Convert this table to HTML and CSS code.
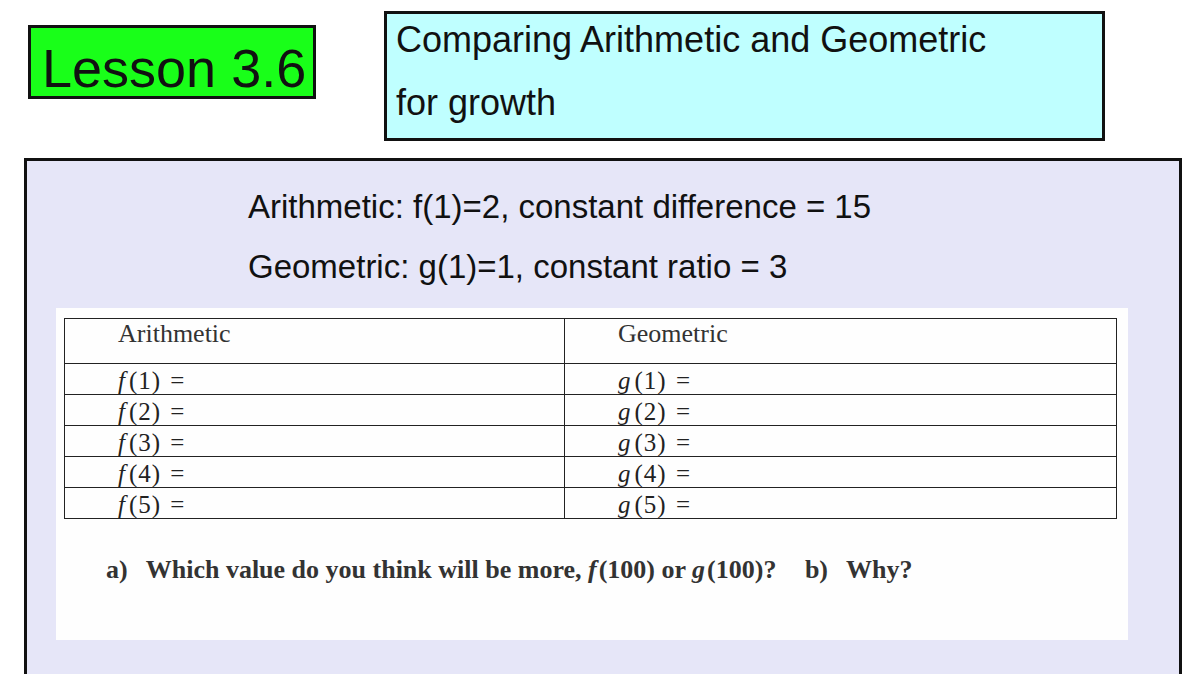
FILE: index.html
```html
<!DOCTYPE html>
<html lang="en">
<head>
    <meta charset="UTF-8">
    <meta name="viewport" content="width=device-width, initial-scale=1.0">
    <title>Lesson 3.6</title>
    <link rel="stylesheet" href="styles.css">
</head>
<body>
    <div class="header">
        <div class="lesson-box">Lesson 3.6</div>
        <div class="title-box">
            <div class="title-text">Comparing Arithmetic and Geometric<br>for growth</div>
        </div>
    </div>

    <div class="panel">
        <div class="givens">
            <p>Arithmetic: f(1)=2, constant difference = 15</p>
            <p>Geometric: g(1)=1, constant ratio = 3</p>
        </div>

        <div class="sheet">
            <table class="seq-table">
                <colgroup>
                    <col class="col-a">
                    <col class="col-g">
                </colgroup>
                <tr class="head-row">
                    <th>Arithmetic</th>
                    <th>Geometric</th>
                </tr>
                <tr><td><i>f</i>(1) =</td><td><i>g</i>(1) =</td></tr>
                <tr><td><i>f</i>(2) =</td><td><i>g</i>(2) =</td></tr>
                <tr><td><i>f</i>(3) =</td><td><i>g</i>(3) =</td></tr>
                <tr><td><i>f</i>(4) =</td><td><i>g</i>(4) =</td></tr>
                <tr><td><i>f</i>(5) =</td><td><i>g</i>(5) =</td></tr>
            </table>

            <div class="question">
                <span class="q-label">a)</span>
                <span class="q-text">Which value do you think will be more, <i>f</i>(100) or <i>g</i>(100)?</span>
                <span class="q-label q-b">b)</span>
                <span class="q-text">Why?</span>
            </div>
        </div>
    </div>
</body>
</html>
```

FILE: styles.css
```css
body {
    margin: 0;
    padding: 0;
    background-color: #ffffff;
    font-family: "Liberation Sans", Arial, sans-serif;
    color: #111;
    overflow: hidden;
}
.header {
    display: flex;
    align-items: flex-start;
    padding-top: 11px;
}
.lesson-box {
    margin-left: 28px;
    margin-top: 14px;
    width: 288px;
    height: 74px;
    border: 3px solid #111;
    background-color: #19ff19;
    font-size: 54px;
    line-height: 80px;
    padding-left: 11px;
    box-sizing: border-box;
    overflow: hidden;
    white-space: nowrap;
}
.title-box {
    margin-left: 68px;
    width: 721px;
    height: 130px;
    border: 3px solid #111;
    background-color: #bfffff;
    padding-left: 9px;
    box-sizing: border-box;
}
.title-text {
    font-size: 36px;
    line-height: 63px;
    margin-top: -6px;
}
.panel {
    margin-left: 24px;
    margin-top: 17px;
    width: 1158px;
    height: 540px;
    border: 3px solid #111;
    background-color: #e6e6f8;
    box-sizing: border-box;
    padding-top: 16px;
    padding-left: 29px;
}
.givens {
    padding-left: 192px;
}
.givens p {
    margin: 0;
    font-size: 33px;
    line-height: 60px;
}
.sheet {
    margin-top: 11px;
    width: 1072px;
    height: 332px;
    background-color: #fefefe;
    padding: 10px 8px 0 8px;
    box-sizing: border-box;
    font-family: "Liberation Serif", "Times New Roman", serif;
}
.seq-table {
    width: 1052px;
    table-layout: fixed;
    border-collapse: collapse;
    color: #222;
}
.col-a {
    width: 500px;
}
.col-g {
    width: 552px;
}
.seq-table th,
.seq-table td {
    border: 1.5px solid #222;
    padding: 0 0 0 53px;
    text-align: left;
    vertical-align: top;
}
.seq-table th {
    height: 44px;
    font-weight: normal;
    font-size: 26px;
    line-height: 30px;
    color: #333;
}
.seq-table td {
    height: 30px;
    box-sizing: border-box;
    font-size: 25px;
    line-height: 27px;
    padding-top: 3px;
    letter-spacing: 1px;
    word-spacing: 2px;
}
.seq-table i {
    margin-right: 3px;
}
.question {
    margin-top: 36px;
    padding-left: 42px;
    font-size: 26px;
    font-weight: bold;
    color: #333;
    white-space: nowrap;
}
.question i {
    margin-right: 2px;
}
.q-label {
    margin-right: 12px;
}
.q-b {
    margin-left: 22px;
}
```
